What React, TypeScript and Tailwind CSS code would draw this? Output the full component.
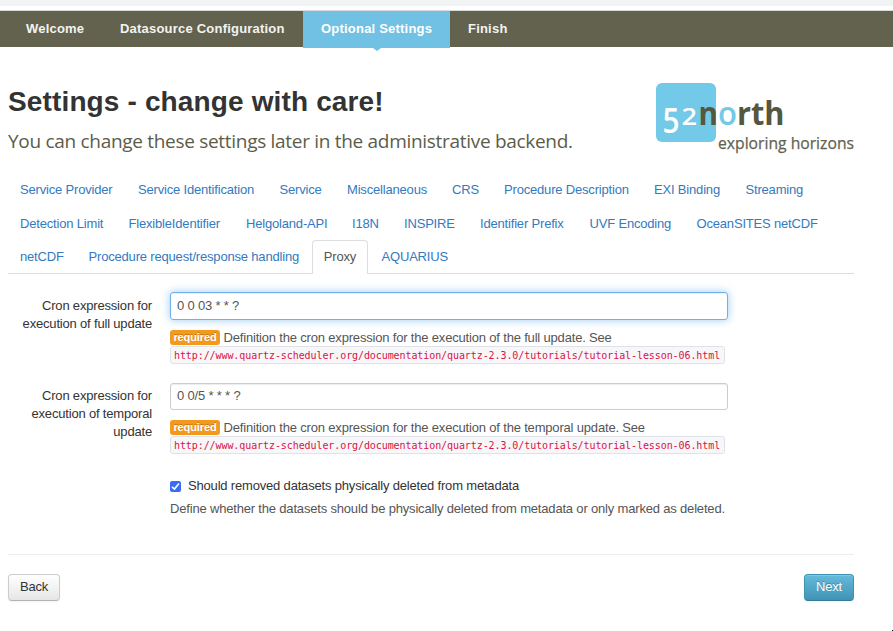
import { ReactNode } from 'react';

type Tab = { label: string; width: string; active?: boolean };

const rows: Tab[][] = [
  [
    { label: 'Service Provider', width: 'w-[118px]' },
    { label: 'Service Identification', width: 'w-[141.5px]' },
    { label: 'Service', width: 'w-[67.5px]' },
    { label: 'Miscellaneous', width: 'w-[105px]' },
    { label: 'CRS', width: 'w-[52px]' },
    { label: 'Procedure Description', width: 'w-[150px]' },
    { label: 'EXI Binding', width: 'w-[91.5px]' },
    { label: 'Streaming', width: 'w-[90px]' },
  ],
  [
    { label: 'Detection Limit', width: 'w-[108.5px]' },
    { label: 'FlexibleIdentifier', width: 'w-[117.5px]' },
    { label: 'Helgoland-API', width: 'w-[106px]' },
    { label: 'I18N', width: 'w-[52px]' },
    { label: 'INSPIRE', width: 'w-[76px]' },
    { label: 'Identifier Prefix', width: 'w-[109.5px]' },
    { label: 'UVF Encoding', width: 'w-[107px]' },
    { label: 'OceanSITES netCDF', width: 'w-[150px]' },
  ],
];

function TabRow({ tabs }: { tabs: Tab[] }) {
  return (
    <div className="flex h-[34px] pl-3 pt-[8px] text-[#337ac0]">
      {tabs.map((t) => (
        <a key={t.label} className={`${t.width} shrink-0 whitespace-nowrap`}>
          {t.label}
        </a>
      ))}
    </div>
  );
}

function Help({ kind }: { kind: string }) {
  return (
    <div className="mt-[9px] text-[#555]">
      <div className="flex h-[17px] items-start whitespace-nowrap">
        <span className="mr-[3.5px] mt-px h-[15px] w-[50px] rounded-[3px] bg-[#f39a1e] text-center text-[11px] font-bold leading-[15px] tracking-[-0.1px] text-white [text-shadow:0_-1px_0_rgba(0,0,0,0.25)]">
          required
        </span>
        <span>Definition the cron expression for the execution of the {kind} update. See</span>
      </div>
      <code className="block h-[18px] w-[555px] whitespace-nowrap rounded-[3px] border border-[#e1e1e8] bg-[#f7f7f9] pl-[3px] font-['DejaVu_Sans_Mono',monospace] text-[10px] leading-[17px] tracking-[-0.085px] text-[#d14]">
        http://www.quartz-scheduler.org/documentation/quartz-2.3.0/tutorials/tutorial-lesson-06.html
      </code>
    </div>
  );
}

function Field({ label, children }: { label: ReactNode; children: ReactNode }) {
  return (
    <div className="flex">
      <label className="mr-[18px] w-[144px] shrink-0 pt-[5px] text-right text-[#333]">{label}</label>
      <div className="w-[558px]">{children}</div>
    </div>
  );
}

function Logo() {
  return (
    <svg width="198" height="76" viewBox="0 0 198 76" className="mt-[36px] shrink-0 overflow-visible tracking-normal" fontFamily="Open Sans, sans-serif">
      <rect x="0" y="0" width="60" height="59" rx="6" fill="#73c9e8" />
      <text x="6.5" y="50" fontSize="34" fontWeight="600" fill="#fff" textLength="17" lengthAdjust="spacingAndGlyphs">5</text>
      <text x="25.500" y="42" fontSize="22.500" fontWeight="600" fill="#fff" textLength="15.500" lengthAdjust="spacingAndGlyphs">2</text>
      <g fontSize="33" fontWeight="700">
        <text x="42.500" y="42" fill="#55573f" textLength="19.500" lengthAdjust="spacingAndGlyphs">n</text>
        <text x="62" y="42" fontWeight="600" fill="#73c9e8" textLength="19" lengthAdjust="spacingAndGlyphs">o</text>
        <text x="81" y="42" fill="#55573f" textLength="47.500" lengthAdjust="spacingAndGlyphs">rth</text>
      </g>
      <text x="62" y="65.500" fontSize="17" fill="#62624f" stroke="#62624f" strokeWidth="0.25" textLength="136" lengthAdjust="spacingAndGlyphs">exploring horizons</text>
    </svg>
  );
}

export default function App() {
  return (
    <div className="relative flex h-[631px] w-[893px] flex-col overflow-hidden bg-white font-['Liberation_Sans',Arial,sans-serif] text-[13px] leading-[18px] tracking-[-0.18px]">
      <div className="h-[6px] bg-[#f1f3f4]" />
      <div className="mt-[4px] h-px bg-[#d8dadc]" />
      <nav className="flex h-[36px] shrink-0 bg-[#62624f] text-[13px] font-bold leading-[35px] tracking-[0.21px] text-[#f3f3f0]">
        <a className="w-[102px] pl-[26px]">Welcome</a>
        <a className="w-[201px] pl-[18px]">Datasource Configuration</a>
        <a className="relative h-[37px] w-[147px] bg-[#70c1e3] pl-[18px] text-white">
          Optional Settings
          <span className="absolute left-[70px] top-[37px] border-x-[4px] border-t-[3px] border-x-transparent border-t-[#70c1e3]" />
        </a>
        <a className="pl-[18px]">Finish</a>
      </nav>
      <main className="ml-[8px] w-[846px]">
        <header className="flex h-[126px] justify-between">
          <div className="pt-[37px]">
            <h1 className="whitespace-nowrap text-[28px] font-bold leading-[36px] tracking-[0.14px] text-[#333]">Settings - change with care!</h1>
            <h2 className="mt-[7px] whitespace-nowrap font-['Open_Sans',sans-serif] text-[19px] leading-[28px] tracking-[-0.3px] text-[#5c5c49]">
              You can change these settings later in the administrative backend.
            </h2>
          </div>
          <Logo />
        </header>
        <div className="border-b border-[#ddd]">
          {rows.map((r, i) => (
            <TabRow key={i} tabs={r} />
          ))}
          <div className="-mb-px flex h-[33px] pl-3 text-[#337ac0]">
            <a className="w-[68.500px] pt-[7px]">netCDF</a>
            <a className="w-[223.500px] whitespace-nowrap pt-[7px]">Procedure request/response handling</a>
            <a className="-mt-px mr-[13.500px] h-[34px] w-[56px] rounded-t-[4px] border border-b-0 border-[#ddd] bg-white pt-[7px] text-center text-[#555]">Proxy</a>
            <a className="pt-[7px]">AQUARIUS</a>
          </div>
        </div>
        <form className="mt-[18px]">
          <div className="h-[91px]">
            <Field label={<>Cron expression for<br />execution of full update</>}>
              <input readOnly value="0 0 03 * * ?" className="block h-[28px] w-[558px] rounded-[3px] border border-[#72b0ec] px-[6px] pb-[2px] text-[#555] shadow-[inset_0_1px_1px_rgba(0,0,0,0.075),0_0_8px_rgba(82,168,236,0.6)] outline-none" />
              <Help kind="full" />
            </Field>
          </div>
          <div className="-mt-px h-[95px]">
            <Field label={<>Cron expression for<br />execution of temporal<br />update</>}>
              <input readOnly value="0 0/5 * * * ?" className="mt-px block h-[27px] w-[558px] rounded-[3px] border border-[#ccc] px-[6px] pb-[2px] text-[#555] shadow-[inset_0_1px_1px_rgba(0,0,0,0.075)] outline-none" />
              <Help kind="temporal" />
            </Field>
          </div>
          <div className="ml-[162px] whitespace-nowrap">
            <label className="flex items-center text-[#333]">
              <span className="mr-[7px] flex size-[11px] items-center justify-center rounded-[2px] bg-[#3b6bf5]">
                <svg width="9" height="9" viewBox="0 0 9 9" fill="none" stroke="#fff" strokeWidth="1.6">
                  <path d="M1 4.800L3.400 7L8 1.500" />
                </svg>
              </span>
              Should removed datasets physically deleted from metadata
            </label>
            <p className="mt-[5px] text-[#555]">Define whether the datasets should be physically deleted from metadata or only marked as deleted.</p>
          </div>
        </form>
        <hr className="mt-[36px] border-[#eee]" />
        <div className="mt-[19px] flex justify-between">
          <button className="h-[27px] w-[52px] rounded-[4px] border border-[#ccc] border-b-[#b3b3b3] bg-linear-to-b from-white to-[#e6e6e6] pb-[2px] text-[#333] shadow-[0_1px_2px_rgba(0,0,0,0.05)]">Back</button>
          <button className="h-[27px] w-[50px] rounded-[4px] border border-[#3f93b2] border-b-[#327a96] bg-linear-to-b from-[#64bbdc] to-[#4193b4] pb-[2px] text-white shadow-[inset_0_1px_0_rgba(255,255,255,0.2),0_1px_2px_rgba(0,0,0,0.05)] [text-shadow:0_-1px_0_rgba(0,0,0,0.25)]">Next</button>
        </div>
      </main>
      <span className="absolute bottom-0 right-0 size-px bg-black" />
    </div>
  );
}
